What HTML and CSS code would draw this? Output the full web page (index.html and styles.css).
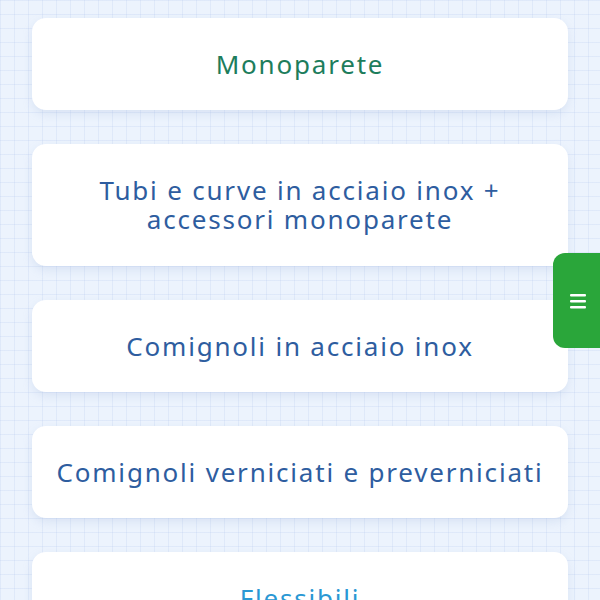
FILE: index.html
```html
<!DOCTYPE html>
<html lang="it">
<head>
<meta charset="utf-8">
<link rel="stylesheet" href="styles.css">
</head>
<body>
<main class="list">
  <a class="card green">Monoparete</a>
  <a class="card two">Tubi e curve in acciaio inox +<br>accessori monoparete</a>
  <a class="card">Comignoli in acciaio inox</a>
  <a class="card">Comignoli verniciati e preverniciati</a>
  <a class="card light">Flessibili</a>
</main>
<div class="tab">
  <svg width="18" height="16" viewBox="0 0 18 16"><rect x="1" y="1" width="16" height="2.6" rx="1" fill="#fff"/><rect x="1" y="7" width="16" height="2.6" rx="1" fill="#fff"/><rect x="1" y="13" width="16" height="2.6" rx="1" fill="#fff"/></svg>
</div>
</body>
</html>
```
FILE: styles.css
```css
html, body { margin: 0; height: 100%; overflow: hidden; }
body {
  background-color: #ecf3fd;
  background-image:
    linear-gradient(to right, rgba(190, 208, 238, 0.28) 1px, transparent 1px),
    linear-gradient(to bottom, rgba(190, 208, 238, 0.28) 1px, transparent 1px);
  background-size: 14px 14px;
  font-family: "Noto Sans", "Open Sans", sans-serif;
}
.list {
  display: flex;
  flex-direction: column;
  gap: 34px;
  padding: 18px 32px;
}
.card {
  display: block;
  background: #fff;
  border-radius: 14px;
  padding: 31px 6px;
  text-align: center;
  font-size: 26px;
  line-height: 30px;
  color: #2e5d9f;
  letter-spacing: 1.8px;
  box-shadow: 0 4px 10px rgba(150, 175, 215, 0.22);
}
.card.two { padding: 32px 6px; line-height: 29px; }
.card.green { color: #1d7d5c; }
.card.light { color: #2a98d4; }
.tab {
  position: fixed;
  right: 0;
  top: 253px;
  width: 47px;
  height: 95px;
  background: #2aa63a;
  border-radius: 12px 0 0 12px;
  display: flex;
  align-items: center;
  justify-content: center;
}
.tab svg { margin-left: 2px; }
```
